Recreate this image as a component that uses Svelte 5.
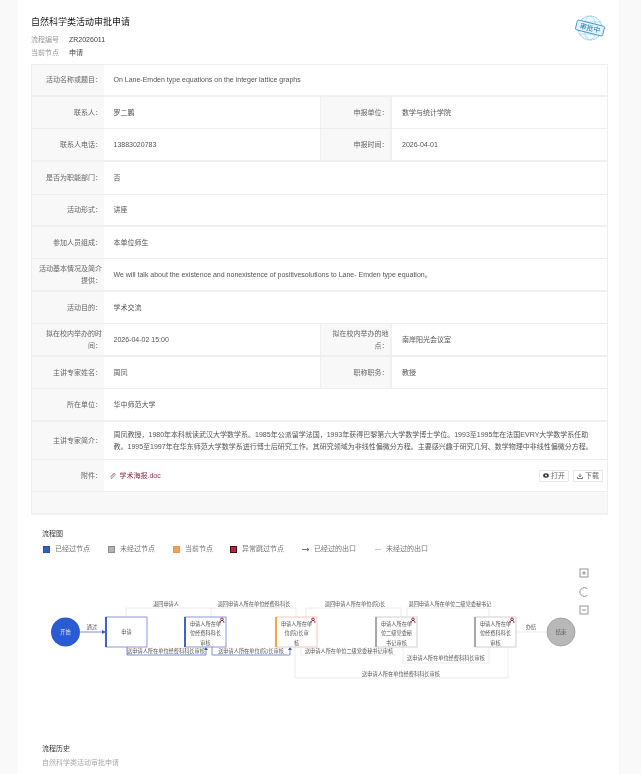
<script>
  const rows = [
    { h: 32, thick: true, cells: [["活动名称或题目：", "On Lane-Emden type equations on the integer lattice graphs"]] },
    { h: 32, cells: [["联系人：", "罗二鹏"], ["申报单位：", "数学与统计学院"]] },
    { h: 33, thick: true, cells: [["联系人电话：", "13883020783"], ["申报时间：", "2026-04-01"]] },
    { h: 33, cells: [["是否为职能部门：", "否"]] },
    { h: 32, thick: true, cells: [["活动形式：", "讲座"]] },
    { h: 32, cells: [["参加人员组成：", "本单位师生"]] },
    { h: 33, thick: true, cells: [["活动基本情况及简介提供：", "We will talk about the existence and nonexistence of positivesolutions to Lane- Emden type equation。"]] },
    { h: 32, cells: [["活动目的：", "学术交流"]] },
    { h: 33, thick: true, cells: [["拟在校内举办的时间：", "2026-04-02 15:00"], ["拟在校内举办的地点：", "南岸阳光会议室"]] },
    { h: 32, cells: [["主讲专家姓名：", "周凤"], ["职称职务：", "教授"]] },
    { h: 33, thick: true, cells: [["所在单位：", "华中师范大学"]] },
    { h: 38, cells: [["主讲专家简介：", "周凤教授，1980年本科就读武汉大学数学系。1985年公派留学法国，1993年获得巴黎第六大学数学博士学位。1993至1995年在法国EVRY大学数学系任助教。1995至1997年在华东师范大学数学系进行博士后研究工作。其研究领域为非线性偏微分方程。主要感兴趣于研究几何、数学物理中非线性偏微分方程。"]] }
  ];

  const legend = [
    { label: "已经过节点", color: "#2f5fc9", border: "#2a4fa8" },
    { label: "未经过节点", color: "#b4b4b4", border: "#8e8e8e" },
    { label: "当前节点", color: "#f0a24e", border: "#e79a45" },
    { label: "异常跳过节点", color: "#c8203c", border: "#3a1018" }
  ];

  const nodes = [
    { x: 106, lines: ["申请"], kind: "done" },
    { x: 185, lines: ["申请人所在单", "位经费科科长", "审核"], kind: "done", user: true },
    { x: 276, lines: ["申请人所在单", "位(院)长审", "核"], kind: "current", user: true },
    { x: 376, lines: ["申请人所在单", "位二级党委秘", "书记审核"], kind: "todo", user: true },
    { x: 475, lines: ["申请人所在单", "位经费科科长", "审核"], kind: "todo", user: true }
  ];

  const edgeLabels = [
    [166, 606, "退回申请人"],
    [254, 606, "退回申请人所在单位经费科科长"],
    [355, 606, "退回申请人所在单位(院)长"],
    [450, 606, "退回申请人所在单位二级党委秘书记"],
    [166, 653, "送申请人所在单位经费科科长审核"],
    [251, 653, "送申请人所在单位(院)长审核"],
    [349, 653, "送申请人所在单位二级党委秘书记审核"],
    [446, 660, "送申请人所在单位经费科科长审核"],
    [401, 676, "送申请人所在单位经费科科长审核"],
    [92, 629, "通过"],
    [531, 629, "办结"]
  ];
</script>

<div class="card">
  <header class="head">
    <div>
      <h1>自然科学类活动审批申请</h1>
      <div class="meta"><span>流程编号</span><b>ZR2026011</b></div>
      <div class="meta"><span>当前节点</span><b>申请</b></div>
    </div>
    <svg class="stamp" width="30" height="30" viewBox="0 0 30 30">
      <circle cx="15" cy="15" r="12" fill="#eef7fc" stroke="#6cb6de" stroke-width="0.8" stroke-dasharray="2 0.8" />
      <ellipse cx="15" cy="15" rx="6" ry="12" fill="none" stroke="#9ad0ea" stroke-width="0.6" />
      <path d="M4 9h22M4 21h22" stroke="#9ad0ea" stroke-width="0.6" />
      <g transform="rotate(14 15 15)">
        <rect x="1" y="10" width="28" height="10" rx="1.5" fill="#e4f3fb" stroke="#3f9ad0" stroke-width="0.9" />
        <text x="15" y="17.6" text-anchor="middle" class="stamp-text">审批中</text>
      </g>
    </svg>
  </header>

  <div class="table">
    {#each rows as row}
      <div class="row" class:thick={row.thick} style="height:{row.h}px">
        {#each row.cells as cell, i}
          <div class="label" class:second={i === 1}>{cell[0]}</div>
          <div class="value" class:half={row.cells.length > 1}>{cell[1]}</div>
        {/each}
      </div>
    {/each}
    <div class="row attach">
      <div class="label">附件：</div>
      <div class="value file">
        <svg class="clip" width="7" height="8" viewBox="0 0 7 8">
          <path d="M5.6 1.6 2.2 5.4c-.7.8.3 1.6 1 .9l2.6-3.1c1-1.2-.5-2.6-1.6-1.4L1.4 4.9" fill="none" stroke="#666" stroke-width="0.6" />
        </svg>
        <a href="#top">学术海报.doc</a>
        <div class="actions">
          <button>
            <svg width="6" height="5" viewBox="0 0 6 5"><ellipse cx="3" cy="2.5" rx="2.8" ry="2.2" fill="#333" /><circle cx="3" cy="2.5" r="1" fill="#fff" /></svg>
            打开
          </button>
          <button>
            <svg width="6" height="6" viewBox="0 0 6 6"><path d="M3 .5v3.2M1.8 2.6 3 3.9l1.2-1.3M.5 4v1.5h5V4" fill="none" stroke="#444" stroke-width="0.7" /></svg>
            下载
          </button>
        </div>
      </div>
    </div>
    <div class="strip"></div>
  </div>

  <section class="flow">
    <h2>流程图</h2>
    <div class="legend">
      {#each legend as item}
        <span class="key"><i style="background:{item.color};border-color:{item.border}"></i>{item.label}</span>
      {/each}
      <span class="key line"><svg width="8" height="5" viewBox="0 0 8 5"><path d="M0 2.5h6.5M5 1l2 1.5L5 4" fill="none" stroke="#44507f" stroke-width="0.8" /></svg>已经过的出口</span>
      <span class="key line"><svg width="8" height="5" viewBox="0 0 8 5"><path d="M1 2.5h6" fill="none" stroke="#bbb" stroke-width="0.8" /></svg>未经过的出口</span>
    </div>

    <svg class="diagram" width="601" height="132" viewBox="18 560 601 132">
      <!-- return edges -->
      <g class="edge-off">
        <path d="M126 617V608H211" />
        <path d="M211 617V608H296V617" />
        <path d="M306 617V608H401V617" />
        <path d="M407 617V608H489V617" />
        <path d="M301 647V655H397" />
        <path d="M403 647V663H489V647" />
        <path d="M295 647V678H508V647" />
        <path d="M517 632H546" />
      </g>
      <g class="edge-on">
        <path d="M80 632H105" />
        <path d="M127 647V655H206V648" />
        <path d="M212 647V655H290V648" />
      </g>
      <g class="arrow">
        <path d="M102 630 106 632 102 634Z" />
        <path d="M204 650 206 647 208 650Z" />
        <path d="M288 650 290 647 292 650Z" />
      </g>

      <circle cx="65.5" cy="632" r="14.5" fill="#2b5bd3" />
      <text x="65.5" y="634" class="t-start">开始</text>
      <circle cx="561" cy="632" r="14" fill="#b8b8b8" stroke="#9a9a9a" stroke-width="0.8" />
      <text x="561" y="634" class="t-edge">结束</text>

      {#each nodes as n}
        <g class="node {n.kind}">
          <rect x={n.x} y="617" width="41" height="30" />
          <path class="side" d="M{n.x} 617V647" />
          {#each n.lines as line, i}
            <text
              x={n.x + 20.5}
              y={n.lines.length === 1 ? 634 : 625.5 + i * 9.5}
              class="t-edge">{line}</text>
          {/each}
          {#if n.user}
            <g class="user" transform="translate({n.x + 37} 620.5)">
              <circle cx="0" cy="-1.2" r="1.3" />
              <path d="M-2 2.4C-2 .6-1 0 0 0S2 .6 2 2.4" />
            </g>
          {/if}
        </g>
      {/each}

      {#each edgeLabels as e}
        <text x={e[0]} y={e[1]} class="t-edge">{e[2]}</text>
      {/each}

      <g class="tools">
        <rect x="580" y="569" width="8" height="8" />
        <path d="M582 573h4M584 571v4" />
        <path d="M587.5 589A4.4 4.4 0 1 0 587.5 595" />
        <rect x="580" y="606" width="8" height="8" />
        <path d="M582 610h4" />
      </g>
    </svg>
  </section>

  <section class="history">
    <h2>流程历史</h2>
    <p>自然科学类活动审批申请</p>
  </section>
</div>

<style>
  :global(body) {
    background: #f9f9f9;
    overflow: hidden;
  }
  .card {
    box-sizing: border-box;
    width: 601px;
    height: 774px;
    margin-left: 18px;
    padding: 0 11px 0 13px;
    background: #fff;
    font-family: "Liberation Sans", "Noto Sans CJK SC", sans-serif;
    font-size: 7px;
    color: #555;
    overflow: hidden;
    filter: blur(0.35px);
  }
  .head {
    display: flex;
    justify-content: space-between;
    height: 64px;
  }
  h1 {
    margin: 16px 0 5px;
    font-size: 9px;
    line-height: 12px;
    font-weight: 400;
    color: #111;
  }
  .meta {
    display: flex;
    gap: 10px;
    height: 13px;
    line-height: 13px;
    color: #999;
  }
  .meta b {
    font-weight: 400;
    color: #444;
  }
  .stamp {
    margin: 13px 3px 0 0;
  }
  .stamp-text {
    font-size: 7px;
    fill: #1f74ad;
    text-anchor: middle;
  }
  .table {
    border: 1px solid #eeeeee;
    border-bottom: 2px solid #f1f1f1;
    background: #f8f8f8;
  }
  .row {
    box-sizing: border-box;
    display: flex;
    border-bottom: 1px solid #eeeeee;
  }
  .row.thick {
    border-bottom: 2px solid #f0f0f0;
  }
  .label {
    box-sizing: border-box;
    flex: 0 0 71.5px;
    display: flex;
    align-items: center;
    justify-content: flex-end;
    padding: 0 1.5px;
    background: #f8f8f8;
    text-align: right;
    line-height: 11.5px;
    color: #666;
  }
  .label.second {
    flex: 0 0 72px;
    border-left: 1px solid #eeeeee;
    border-right: 2px solid #f0f0f0;
  }
  .value {
    box-sizing: border-box;
    flex: 1;
    min-width: 0;
    display: flex;
    align-items: center;
    padding: 0 12px 0 10px;
    background: #fff;
    line-height: 11.5px;
    color: #555;
  }
  .value.half {
    flex: 0 0 216.5px;
  }
  .label.second + .value.half {
    flex: 1;
  }
  .attach {
    height: 32px;
  }
  .file {
    padding: 0 4px 0 4px;
  }
  .clip {
    margin: 0 4px 0 1px;
  }
  .file a {
    color: #8a2c44;
    text-decoration: none;
  }
  .actions {
    display: flex;
    gap: 4px;
    margin-left: auto;
  }
  .actions button {
    display: flex;
    align-items: center;
    justify-content: center;
    gap: 2px;
    box-sizing: border-box;
    width: 30px;
    height: 12px;
    padding: 0;
    border: 1px solid #e8e8e8;
    border-radius: 1px;
    background: #fff;
    font: inherit;
    color: #666;
  }
  .strip {
    height: 21px;
  }
  .flow {
    margin: 1px -11px 0 -13px;
  }
  h2 {
    margin: 0;
    font-size: 7px;
    line-height: 10px;
    font-weight: 400;
    color: #333;
  }
  .flow h2 {
    margin: 14px 0 0 24px;
  }
  .legend {
    display: flex;
    margin: 5px 0 0 25px;
    height: 10px;
    line-height: 10px;
    color: #777;
  }
  .key {
    display: flex;
    align-items: center;
    gap: 5px;
    width: 65px;
  }
  .key:nth-child(3) {
    width: 57px;
  }
  .key:nth-child(4) {
    width: 72px;
  }
  .key.line {
    width: 72px;
    gap: 4px;
  }
  .key i {
    box-sizing: border-box;
    width: 7px;
    height: 7px;
    border: 1px solid;
  }
  .diagram {
    display: block;
    margin-top: 6px;
  }
  .edge-off path {
    fill: none;
    stroke: #ececec;
    stroke-width: 1;
  }
  .edge-on path {
    fill: none;
    stroke: #7b8fd6;
    stroke-width: 1;
  }
  .arrow path {
    fill: #3e5bb8;
  }
  .node rect {
    fill: #fff;
    stroke-width: 1;
  }
  .node .side {
    stroke-width: 2;
    fill: none;
  }
  .done rect {
    stroke: #8f96de;
  }
  .done .side {
    stroke: #3f63c9;
  }
  .current rect {
    stroke: #f4c8be;
  }
  .current .side {
    stroke: #f0a83e;
  }
  .todo rect {
    stroke: #cfcfcf;
  }
  .todo .side {
    stroke: #a8a8a8;
  }
  .user circle,
  .user path {
    fill: none;
    stroke: #7a1230;
    stroke-width: 0.9;
  }
  .t-edge,
  .t-start {
    font-size: 5.2px;
    text-anchor: middle;
    fill: #555;
  }
  .t-start {
    fill: #dfe8ff;
  }
  .tools rect,
  .tools path {
    fill: none;
    stroke: #8a8a8a;
    stroke-width: 0.9;
  }
  .history {
    margin: 0 0 0 11px;
    padding-top: 52px;
  }
  .history p {
    margin: 4px 0 0;
    line-height: 10px;
    color: #aaa;
  }
</style>
